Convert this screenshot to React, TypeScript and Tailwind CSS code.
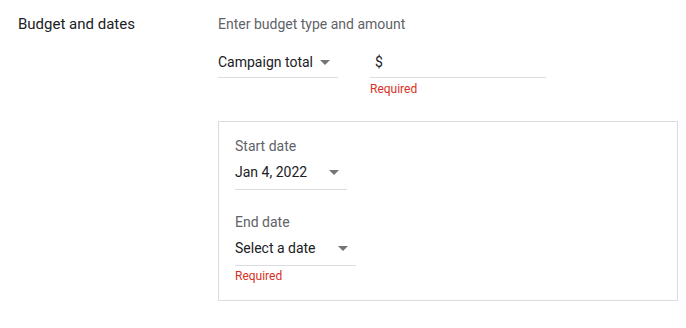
import React from 'react';

const Caret = () => (
  <svg width="10" height="5" viewBox="0 0 10 5" className="shrink-0">
    <path d="M0 0 L5 5 L10 0 Z" fill="#757575" />
  </svg>
);

interface DropdownProps {
  value: string;
  width: string;
  pad: string;
}

const Dropdown: React.FC<DropdownProps> = ({ value, width, pad }) => (
  <div className={`flex items-center justify-between border-b border-[#dadce0] pr-[8px] ${width} ${pad}`}>
    <span className="text-[14px] leading-5 text-[#202124]">{value}</span>
    <Caret />
  </div>
);

const Required = ({ gap }: { gap: string }) => (
  <div className={`${gap} text-[12px] leading-4 text-[#d93025]`}>Required</div>
);

export default function App() {
  return (
    <div className="min-h-screen w-full bg-white font-['Roboto',sans-serif]">
      <div className="flex pl-[18px] pt-[14px]">
        <div className="w-[200px] text-[15px] leading-5 text-[#202124]">Budget and dates</div>

        <div className="flex flex-col">
          <div className="text-[14px] leading-5 text-[#5f6368]">Enter budget type and amount</div>

          <div className="mt-[18px] flex items-start gap-[32px]">
            <Dropdown value="Campaign total" width="w-[120px]" pad="pb-[5px]" />
            <div className="flex flex-col">
              <div className="w-[176px] border-b border-[#dadce0] pb-[5px] pl-[5px] text-[14px] leading-5 text-[#202124]">
                $
              </div>
              <Required gap="mt-[3px]" />
            </div>
          </div>

          <div className="mt-[24px] w-[460px] border border-[#dadce0] px-[16px] pt-[14px] pb-[16px]">
            <div className="text-[14px] leading-5 text-[#5f6368]">Start date</div>
            <div className="mt-[6px]">
              <Dropdown value="Jan 4, 2022" width="w-[112px]" pad="pb-[7px]" />
            </div>

            <div className="mt-[22px] text-[14px] leading-5 text-[#5f6368]">End date</div>
            <div className="mt-[6px]">
              <Dropdown value="Select a date" width="w-[121px]" pad="pb-[7px]" />
            </div>
            <Required gap="mt-[2px]" />
          </div>
        </div>
      </div>
    </div>
  );
}
